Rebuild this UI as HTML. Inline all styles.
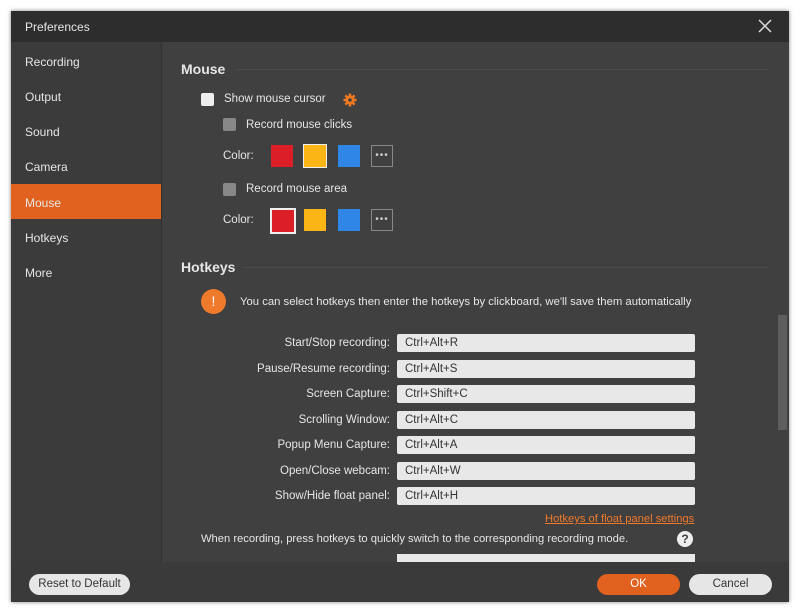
<!DOCTYPE html>
<html><head><style>
body{margin:0;width:800px;height:612px;background:#fff;font-family:"Liberation Sans",sans-serif;font-size:11.5px;color:#e6e6e6;position:relative;overflow:hidden}
.a{position:absolute}
#win{left:11px;top:11px;width:778px;height:591px;background:#404040;box-shadow:0 0 4px rgba(0,0,0,.5)}
.nav{left:13px;font-size:12px;color:#e6e6e6}
.cb{width:13px;height:13px;border-radius:2px}
.sw{width:22px;height:22px}
.more{width:22px;height:22px;border:1px solid #888;box-sizing:border-box;color:#ccc;text-align:center;line-height:20px;font-size:10px;letter-spacing:1px}
.lbl{width:230px;text-align:right;left:160px}
.inp{left:397px;width:298px;height:18px;background:#e8e8e8;border-radius:2px;color:#333;line-height:18px;padding-left:8px;box-sizing:border-box}
</style></head><body>
<div id="win" class="a"></div>
<div class="a" style="left:11px;top:11px;width:778px;height:31px;background:#2d2d2d"></div>
<div class="a" style="left:25px;top:20px;font-size:12px">Preferences</div>
<svg class="a" style="left:758px;top:19px" width="14" height="14"><path d="M1 1L13 13M13 1L1 13" stroke="#ddd" stroke-width="1.5"/></svg>
<div class="a" style="left:11px;top:42px;width:150px;height:520px;background:#3b3b3b"></div>
<div class="a" style="left:161px;top:42px;width:1px;height:520px;background:#333"></div>
<div class="a nav" style="left:25px;top:55px">Recording</div>
<div class="a nav" style="left:25px;top:90px">Output</div>
<div class="a nav" style="left:25px;top:125px">Sound</div>
<div class="a nav" style="left:25px;top:160px">Camera</div>
<div class="a" style="left:11px;top:184px;width:150px;height:35px;background:#e0621e"></div>
<div class="a nav" style="left:25px;top:196px">Mouse</div>
<div class="a nav" style="left:25px;top:231px">Hotkeys</div>
<div class="a nav" style="left:25px;top:266px">More</div>

<div class="a" style="left:181px;top:61px;font-size:14px;font-weight:bold">Mouse</div>
<div class="a" style="left:236px;top:69px;width:532px;height:1px;background:#4c4c4c"></div>
<div class="a cb" style="left:201px;top:93px;background:#eee"></div>
<div class="a" style="left:224px;top:93px">Show mouse cursor</div>
<svg class="a" style="left:343px;top:93px" width="14" height="14" viewBox="0 0 14 14"><g fill="#f07a22"><circle cx="7" cy="7" r="4.6"/><g stroke="#f07a22" stroke-width="2.4"><path d="M7 0.5V13.5M0.5 7H13.5M2.4 2.4L11.6 11.6M11.6 2.4L2.4 11.6"/></g></g><circle cx="7" cy="7" r="1.8" fill="#404040"/></svg>
<div class="a cb" style="left:223px;top:118px;background:#888"></div>
<div class="a" style="left:246px;top:119px">Record mouse clicks</div>
<div class="a" style="left:223px;top:150px">Color:</div>
<div class="a sw" style="left:271px;top:145px;background:#dc1f26"></div>
<div class="a sw" style="left:303px;top:144px;background:#fbb514;border:1px solid #eee"></div>
<div class="a sw" style="left:338px;top:145px;background:#2f86e6"></div>
<div class="a more" style="left:371px;top:145px">•••</div>
<div class="a cb" style="left:223px;top:183px;background:#888"></div>
<div class="a" style="left:246px;top:183px">Record mouse area</div>
<div class="a" style="left:223px;top:214px">Color:</div>
<div class="a sw" style="left:270px;top:208px;background:#dc1f26;border:2px solid #eee"></div>
<div class="a sw" style="left:304px;top:209px;background:#fbb514"></div>
<div class="a sw" style="left:338px;top:209px;background:#2f86e6"></div>
<div class="a more" style="left:371px;top:209px">•••</div>

<div class="a" style="left:181px;top:259px;font-size:14px;font-weight:bold">Hotkeys</div>
<div class="a" style="left:243px;top:267px;width:525px;height:1px;background:#4c4c4c"></div>
<div class="a" style="left:201px;top:289px;width:25px;height:25px;border-radius:50%;background:#f07a2c;color:#fff;text-align:center;line-height:25px;font-size:14px">!</div>
<div class="a" style="left:240px;top:296px;font-size:11.3px">You can select hotkeys then enter the hotkeys by clickboard, we'll save them automatically</div>
<div class="a" style="left:778px;top:315px;width:9px;height:115px;background:#5e5e5e"></div>

<div class="a lbl" style="top:337px">Start/Stop recording:</div><div class="a inp" style="top:334px">Ctrl+Alt+R</div>
<div class="a lbl" style="top:363px">Pause/Resume recording:</div><div class="a inp" style="top:360px">Ctrl+Alt+S</div>
<div class="a lbl" style="top:388px">Screen Capture:</div><div class="a inp" style="top:385px">Ctrl+Shift+C</div>
<div class="a lbl" style="top:414px">Scrolling Window:</div><div class="a inp" style="top:411px">Ctrl+Alt+C</div>
<div class="a lbl" style="top:439px">Popup Menu Capture:</div><div class="a inp" style="top:436px">Ctrl+Alt+A</div>
<div class="a lbl" style="top:465px">Open/Close webcam:</div><div class="a inp" style="top:462px">Ctrl+Alt+W</div>
<div class="a lbl" style="top:490px">Show/Hide float panel:</div><div class="a inp" style="top:487px">Ctrl+Alt+H</div>
<div class="a" style="left:545px;top:513px;color:#f07a2c;text-decoration:underline;font-size:11.2px">Hotkeys of float panel settings</div>
<div class="a" style="left:201px;top:533px;font-size:11.2px">When recording, press hotkeys to quickly switch to the corresponding recording mode.</div>
<div class="a" style="left:677px;top:531px;width:16px;height:16px;border-radius:50%;background:#eee;color:#404040;text-align:center;line-height:16px;font-weight:bold;font-size:12px">?</div>
<div class="a" style="left:397px;top:554px;width:298px;height:8px;background:#e8e8e8"></div>

<div class="a" style="left:11px;top:562px;width:778px;height:40px;background:#3a3a3a"></div>
<div class="a" style="left:29px;top:574px;width:101px;height:21px;border-radius:11px;background:#e6e6e6;color:#333;text-align:center;line-height:21px">Reset to Default</div>
<div class="a" style="left:597px;top:574px;width:83px;height:21px;border-radius:11px;background:#e0621e;color:#fff;text-align:center;line-height:21px">OK</div>
<div class="a" style="left:689px;top:574px;width:83px;height:21px;border-radius:11px;background:#e6e6e6;color:#333;text-align:center;line-height:21px">Cancel</div>
</body></html>
